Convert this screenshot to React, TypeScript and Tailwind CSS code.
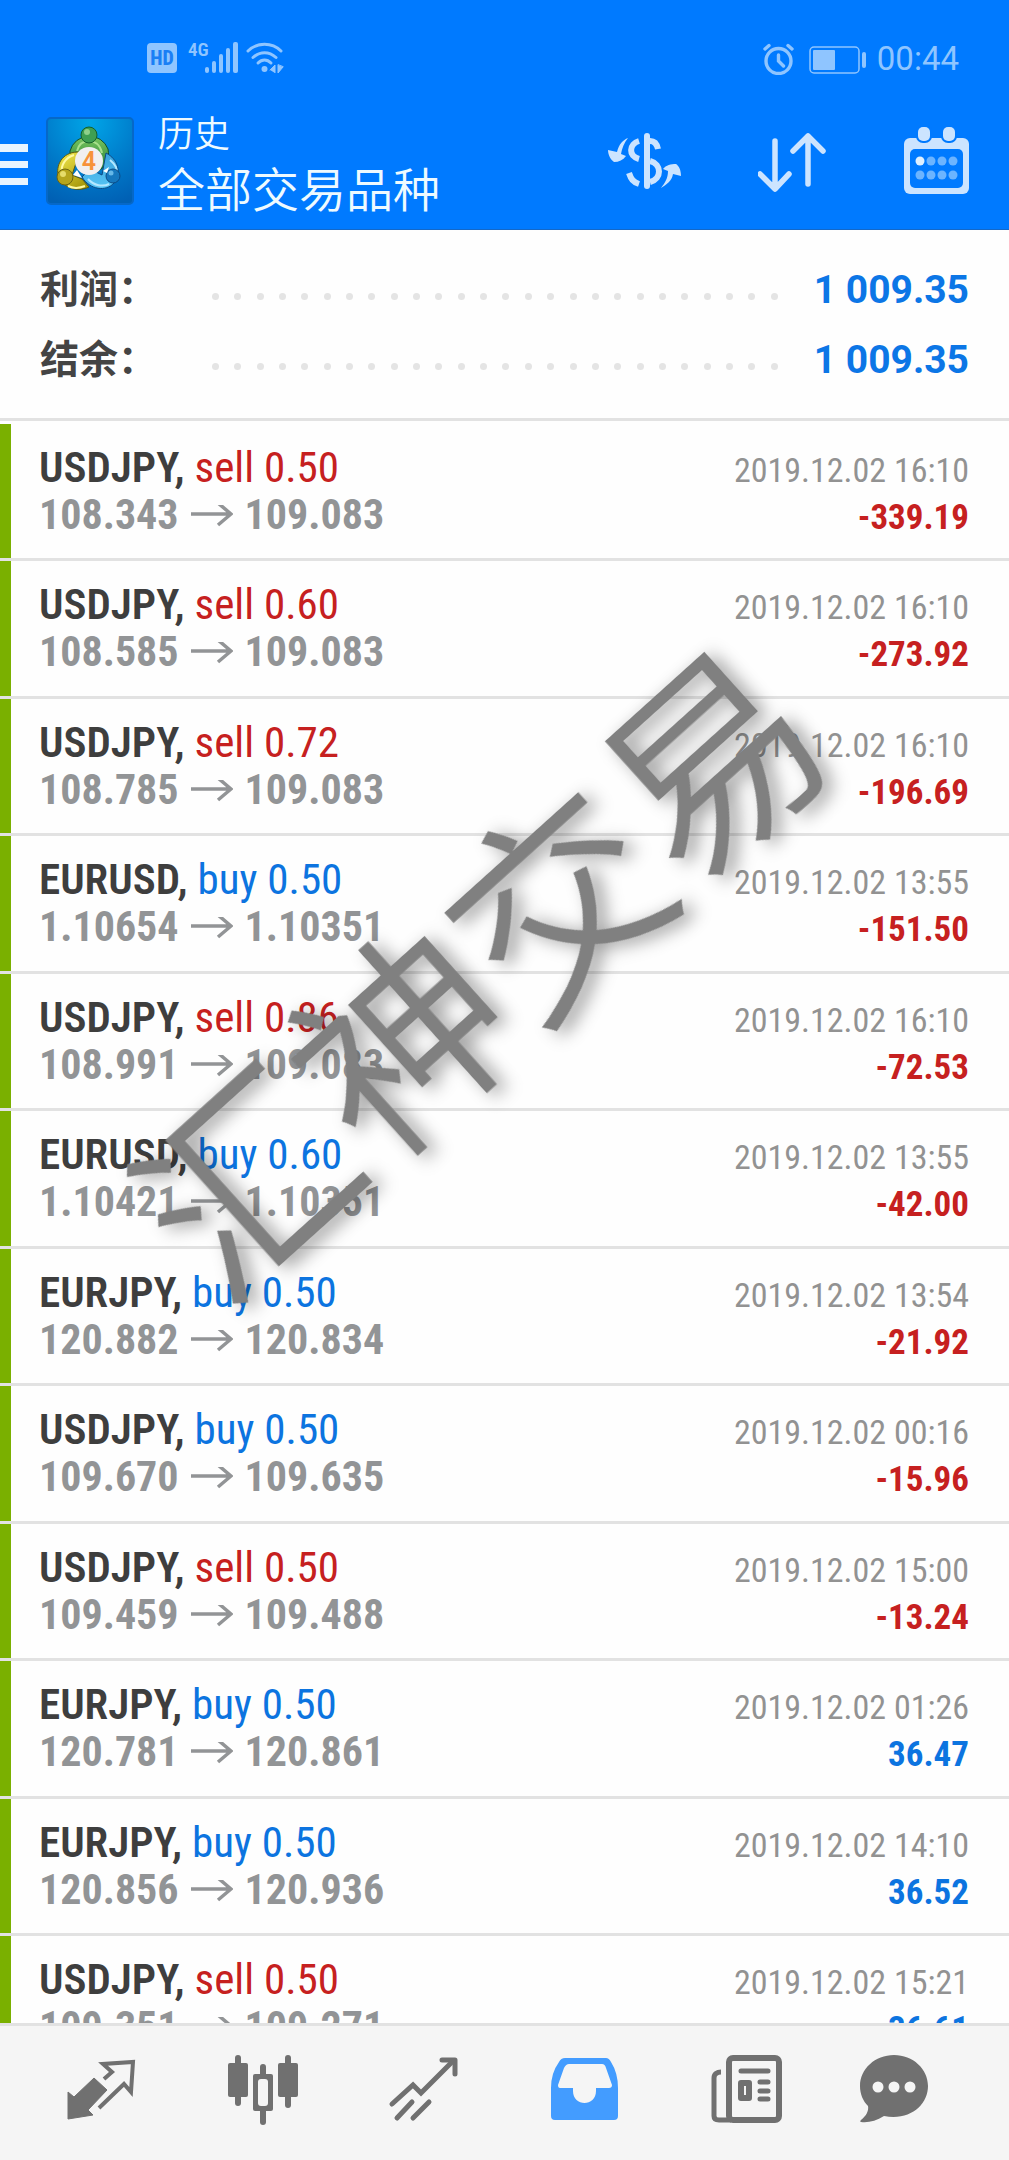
import type { ReactNode } from "react";

interface Deal {
  symbol: string;
  side: "buy" | "sell";
  volume: string;
  open: string;
  close: string;
  time: string;
  profit: string;
}

const deals: Deal[] = [
  { symbol: "USDJPY", side: "sell", volume: "0.50", open: "108.343", close: "109.083", time: "2019.12.02 16:10", profit: "-339.19" },
  { symbol: "USDJPY", side: "sell", volume: "0.60", open: "108.585", close: "109.083", time: "2019.12.02 16:10", profit: "-273.92" },
  { symbol: "USDJPY", side: "sell", volume: "0.72", open: "108.785", close: "109.083", time: "2019.12.02 16:10", profit: "-196.69" },
  { symbol: "EURUSD", side: "buy", volume: "0.50", open: "1.10654", close: "1.10351", time: "2019.12.02 13:55", profit: "-151.50" },
  { symbol: "USDJPY", side: "sell", volume: "0.86", open: "108.991", close: "109.083", time: "2019.12.02 16:10", profit: "-72.53" },
  { symbol: "EURUSD", side: "buy", volume: "0.60", open: "1.10421", close: "1.10351", time: "2019.12.02 13:55", profit: "-42.00" },
  { symbol: "EURJPY", side: "buy", volume: "0.50", open: "120.882", close: "120.834", time: "2019.12.02 13:54", profit: "-21.92" },
  { symbol: "USDJPY", side: "buy", volume: "0.50", open: "109.670", close: "109.635", time: "2019.12.02 00:16", profit: "-15.96" },
  { symbol: "USDJPY", side: "sell", volume: "0.50", open: "109.459", close: "109.488", time: "2019.12.02 15:00", profit: "-13.24" },
  { symbol: "EURJPY", side: "buy", volume: "0.50", open: "120.781", close: "120.861", time: "2019.12.02 01:26", profit: "36.47" },
  { symbol: "EURJPY", side: "buy", volume: "0.50", open: "120.856", close: "120.936", time: "2019.12.02 14:10", profit: "36.52" },
  { symbol: "USDJPY", side: "sell", volume: "0.50", open: "109.351", close: "109.271", time: "2019.12.02 15:21", profit: "36.61" },
];

const summary = [
  { label: "利润\uff1a", value: "1 009.35" },
  { label: "结余\uff1a", value: "1 009.35" },
];

function StatusBar() {
  return (
    <div className="flex h-[100px] items-start justify-between pt-[41px] pr-[50px] pl-[147px] text-[#8fc5ff]">
      <div className="flex items-center">
        {/* HD */}
        <svg className="h-8 w-[30px]" viewBox="0 0 30 32">
          <rect y="2" width="30" height="30" rx="4" fill="currentColor" />
          <text x="15" y="24" textAnchor="middle" fontSize="20" fontWeight="800" fill="#1a7ff5" className="font-['Roboto_Condensed',Roboto]">
            HD
          </text>
        </svg>
        {/* 4G + señal */}
        <svg className="ml-[11px] h-8 w-[51px] overflow-visible" viewBox="0 0 51 32" fill="currentColor">
          <text x="0" y="15" fontSize="19" fontWeight="600" fill="currentColor" className="font-['Roboto_Condensed',Roboto]">
            4G
          </text>
          <rect x="17" y="26" width="4" height="6" rx="2" />
          <rect x="24" y="20" width="4" height="12" rx="2" />
          <rect x="31" y="13" width="4" height="19" rx="2" />
          <rect x="38" y="7" width="4" height="25" rx="2" />
          <rect x="45" y="1" width="5" height="31" rx="2" />
        </svg>
        {/* Wifi */}
        <svg className="ml-[7px] h-8 w-[38px]" viewBox="0 0 38 32" fill="none" stroke="currentColor" strokeWidth="3" strokeLinecap="round">
          <path d="M2 10C11 1 26 1 35 10" />
          <path d="M7 16.5C14 10 23 10 30 16.5" />
          <path d="M12 22C16 18 21 18 25 22" />
          <circle cx="18.500" cy="28" r="3" fill="currentColor" stroke="none" />
          <path d="M24 29 29 24v8M32 24v8l5-6z" strokeWidth="1" fill="currentColor" />
        </svg>
      </div>
      <div className="flex items-center">
        <svg className="h-8 w-[31px]" viewBox="0 0 31 32" fill="none" stroke="currentColor" strokeWidth="3.400" strokeLinecap="round">
          <circle cx="15.500" cy="18" r="12.500" />
          <path d="M2 6l4-3.500M29 6l-4-3.500M15.500 12v6l5 5" />
        </svg>
        <svg className="ml-[15px] h-8 w-[57px]" viewBox="0 0 57 32" fill="none">
          <rect x="1" y="4" width="49" height="26" rx="4" stroke="currentColor" strokeWidth="1.500" />
          <rect x="4" y="7" width="22" height="20" rx="1" fill="currentColor" />
          <rect x="53" y="9" width="4" height="16" rx="2" fill="currentColor" />
        </svg>
        <span className="ml-[11px] text-[33px] leading-9">00:44</span>
      </div>
    </div>
  );
}

function AppLogo() {
  return (
    <svg className="ml-[18px] size-[88px] shrink-0" viewBox="0 0 88 88">
      <defs>
        <radialGradient id="bg" cx="0.5" cy="0.05" r="1">
          <stop offset="0" stopColor="#00a5e8" />
          <stop offset="0.6" stopColor="#0078c8" />
          <stop offset="1" stopColor="#0060b4" />
        </radialGradient>
        <linearGradient id="green" x2="0" y2="1">
          <stop offset="0" stopColor="#7cc860" />
          <stop offset="1" stopColor="#1f7a34" />
        </linearGradient>
        <linearGradient id="yellow" x2="0.6" y2="1">
          <stop offset="0" stopColor="#f6ec50" />
          <stop offset="1" stopColor="#a89a0c" />
        </linearGradient>
        <linearGradient id="blue" x2="0" y2="1">
          <stop offset="0" stopColor="#3aa2dc" />
          <stop offset="1" stopColor="#56c4f4" />
        </linearGradient>
      </defs>
      <rect x="1" y="1" width="86" height="86" rx="4" fill="url(#bg)" stroke="#0668c8" strokeWidth="2" />
      <g strokeWidth="1">
        <path d="M24 34A20 20 0 0 1 62 32C64 42 60 50 52 54L44 40 34 35 24 37Z" fill="url(#green)" stroke="#12502a" />
        <path d="M31 34C33 26 38 24 43 24S54 27 56 36" fill="none" stroke="#a8e08c" strokeWidth="2" />
        <path d="M60 36C72 42 76 56 68 66C60 75 44 73 36 60L44 52 56 58Z" fill="url(#blue)" stroke="#0b4a86" />
        <path d="M64 43C70 48 72 52 70 58M42 62C48 69 57 70 63 67" fill="none" stroke="#b4e8ff" strokeWidth="2" />
        <path d="M34 35C18 34 10 46 12 58C16 70 30 76 43 70L36 62 26 58 30 46Z" fill="url(#yellow)" stroke="#5c5a10" />
        <path d="M28 38C18 41 15 50 16 54M22 69C28 72 34 71 39 69" fill="none" stroke="#fff9a0" strokeWidth="2" />
        <circle cx="43" cy="18" r="8" fill="#3f9f52" stroke="#15602c" />
        <circle cx="41" cy="15" r="3" fill="#8ed08a" />
        <circle cx="19" cy="60" r="8" fill="#b5a51c" stroke="#6c6410" />
        <circle cx="17" cy="57" r="3" fill="#e6dc6a" />
        <circle cx="67" cy="59" r="7" fill="#1678be" stroke="#0c4c86" />
        <circle cx="65" cy="56" r="2.500" fill="#66b8e8" />
        <path d="M27 58 36 61 31 53ZM57 54 63 50 61 56Z" fill="#fff" />
      </g>
      <circle cx="43" cy="44" r="14" fill="#f1eff0" />
      <text x="43" y="53" textAnchor="middle" fontSize="25" fontWeight="600" fill="#f7923a" className="font-[Roboto]">
        4
      </text>
    </svg>
  );
}

function Toolbar() {
  return (
    <div className="flex h-[130px] items-center border-b border-[#1468c8] pr-10 pb-2">
      <button type="button" aria-label="菜单" className="text-[#e8f4ff]">
        <svg className="h-[50px] w-7" viewBox="0 0 28 50" fill="currentColor">
          <path d="M0 8h28v8H0zM0 25h28v7H0zM0 42h28v7H0z" />
        </svg>
      </button>
      <AppLogo />
      <h1 className="ml-6 flex-1 pt-[10px] font-[350] text-[#eefaff]">
        <span className="block text-[36px] leading-[50px]">历史</span>
        <span className="block text-[47px] leading-[62px]">全部交易品种</span>
      </h1>
      <div className="flex items-center gap-[77px] text-[#cce4ff]">
        <button type="button" aria-label="品种">
          <svg className="h-[68px] w-[73px]" viewBox="0 0 73 68" fill="none" stroke="currentColor">
            <path d="M39 9v50" strokeWidth="6" strokeLinecap="round" />
            <path d="M31 14C21 17 20 29 31 32M42 14C47 14 49 17 50 22M31 57C25 55 23 52 21 46M42 34C54 37 54 52 42 55" strokeWidth="6" />
            <path d="M20 11C15 13 11 17 9 25L0 23C0 28 3 33 6 35C11 35 15 33 18 29L13 27C14 21 16 16 20 11Z" fill="currentColor" stroke="none" />
            <path d="M53 61C58 58 64 54 65 47L73 49C73 43 71 39 68 37C63 37 58 38 55 42L60 44C60 51 57 56 53 61Z" fill="currentColor" stroke="none" />
          </svg>
        </button>
        <button type="button" aria-label="排序">
          <svg className="h-[68px] w-[69px]" viewBox="0 0 69 68" fill="none" stroke="currentColor" strokeWidth="5.500" strokeLinecap="round" strokeLinejoin="round">
            <path d="M17 14v47M2 47l15 15 14-15" />
            <path d="M50 57V9M35 24 50 9l15 15" />
          </svg>
        </button>
        <button type="button" aria-label="日期">
          <svg className="h-[68px] w-[65px]" viewBox="0 0 65 68">
            <rect y="11" width="65" height="56" rx="6" fill="currentColor" />
            <rect x="6" y="22" width="53" height="39" rx="5" fill="#007aff" />
            <rect x="12" y="-3" width="16" height="19" rx="7" fill="#007aff" />
            <rect x="37" y="-3" width="16" height="19" rx="7" fill="#007aff" />
            <rect x="14" y="0" width="12" height="14" rx="5" fill="currentColor" />
            <rect x="39" y="0" width="12" height="14" rx="5" fill="currentColor" />
            <g fill="#6cb4ff">
              <circle cx="16" cy="34" r="4.500" fill="#dff0ff" />
              <circle cx="27" cy="34" r="4.500" />
              <circle cx="38" cy="34" r="4.500" />
              <circle cx="49" cy="34" r="4.500" />
              <circle cx="16" cy="48" r="4.500" />
              <circle cx="27" cy="48" r="4.500" />
              <circle cx="38" cy="48" r="4.500" />
              <circle cx="49" cy="48" r="4.500" />
            </g>
          </svg>
        </button>
      </div>
    </div>
  );
}

function SummaryRow({ label, value }: { label: string; value: string }) {
  return (
    <div className="flex h-[70px] items-center font-bold">
      <dt className="w-[172px] text-[39px] text-[#444444]">{label}</dt>
      <dd className="flex flex-1 items-center">
        <span aria-hidden="true" className="mt-3 mr-9 flex flex-1 justify-between">
          {Array.from({ length: 26 }, (_, i) => (
            <span key={i} className="size-[7px] rounded-full bg-[#e4e4e4]" />
          ))}
        </span>
        <span className="text-[39px] text-[#0c76e6]">{value}</span>
      </dd>
    </div>
  );
}

function DealRow({ deal }: { deal: Deal }) {
  return (
    <li className="h-[138px] border-b-3 border-[#e2e2e2] odd:h-[137px]">
      <div className="h-full border-l-11 border-[#7ab000] pt-[19px] pr-10 pl-7 font-['Roboto_Condensed',Roboto,sans-serif]">
        <div className="flex h-12 items-baseline justify-between text-[43px] leading-12">
          <p>
            <span className="font-semibold text-[#3e3e3e]">{deal.symbol}, </span>
            <span className={deal.side === "buy" ? "text-[#0c74e0]" : "text-[#c62020]"}>
              {deal.side} {deal.volume}
            </span>
          </p>
          <time className="text-[34px] text-[#929292]">{deal.time}</time>
        </div>
        <div className="flex h-12 items-baseline justify-between text-[42px] leading-12 font-bold">
          <p className="flex items-baseline text-[#929496]">
            {deal.open}
            <svg className="mx-3 h-6 w-[42px]" viewBox="0 0 42 24" fill="none" stroke="currentColor" strokeWidth="3.500">
              <path d="M0 9h40M27-2l13 11-13 11" />
            </svg>
            {deal.close}
          </p>
          <span className={deal.profit.startsWith("-") ? "text-[35px] text-[#c62020]" : "text-[35px] text-[#0c74e0]"}>{deal.profit}</span>
        </div>
      </div>
    </li>
  );
}

function NavItem({ label, active, children }: { label: string; active?: boolean; children: ReactNode }) {
  return (
    <a href="#" aria-label={label} className={active ? "flex justify-center text-[#439cff]" : "flex justify-center text-[#707070]"}>
      <svg className="size-[72px]" viewBox="0 0 72 72" fill="none" stroke="currentColor">
        {children}
      </svg>
    </a>
  );
}

function BottomNav() {
  return (
    <nav className="grid h-[137px] shrink-0 grid-cols-[repeat(5,161fr)_136fr] border-t-3 border-[#e2e2e2] bg-[#f5f5f5] pt-[28px] pr-[47px] pl-[21px]">
      <NavItem label="行情">
        <path d="M2 38 8 43 28 24 41 36 22 56 27 61 2 65Z" fill="currentColor" strokeWidth="1" strokeLinejoin="round" />
        <path d="M38 25 46 18 37 10 67 8 65 38 58 30 33 54" strokeWidth="4" />
      </NavItem>
      <NavItem label="图表">
        <g fill="currentColor" stroke="none">
          <rect x="8" y="1" width="6" height="51" rx="3" />
          <rect x="1" y="9" width="20" height="34" rx="2" />
          <rect x="33" y="10" width="6" height="61" rx="3" />
          <rect x="26" y="20" width="20" height="37" rx="2" />
          <rect x="58" y="1" width="6" height="53" rx="3" />
          <rect x="51" y="9" width="20" height="34" rx="2" />
          <rect x="31" y="25" width="10" height="27" rx="3" fill="#f5f5f5" />
        </g>
      </NavItem>
      <NavItem label="交易">
        <path d="M4 50 25 31 33 39 64 8" strokeWidth="5" strokeLinecap="round" />
        <path d="M54 6h13v14" strokeWidth="5" strokeLinecap="round" strokeLinejoin="round" />
        <path d="M9 64 24 48M25 64 41 48" strokeWidth="5" strokeLinecap="round" />
      </NavItem>
      <NavItem label="历史" active>
        <path
          d="M16 4H57Q60 4 62 8Q69 19 69 34V62Q69 66 65 66H6Q2 66 2 62V34Q2 19 10 8Q12 4 16 4ZM20 10Q17 10 15 14L9 31Q9 34 11 34H24V37C24 53 47 53 47 37V34H60Q63 34 63 31L57 14Q56 10 53 10Z"
          fill="currentColor"
          fillRule="evenodd"
          stroke="none"
        />
      </NavItem>
      <NavItem label="新闻">
        <rect x="19" y="4" width="50" height="62" rx="4" strokeWidth="6" />
        <path d="M11 18C7 18 4 20 4 24V62C4 65 6 66 9 66H21" strokeWidth="5" />
        <path d="M31 17H58M50 28H58M50 37H58M50 45H58" strokeWidth="5" strokeLinecap="round" />
        <rect x="31" y="29" width="8" height="15" strokeWidth="6" strokeLinejoin="round" />
      </NavItem>
      <NavItem label="信息">
        <path d="M36 1C55 1 70 15 70 32C70 51 52 67 26 62C18 67 10 69 3 68C2 68 2 67 3 66C8 62 11 57 10 52C5 47 2 40 2 32C2 15 17 1 36 1Z" fill="currentColor" stroke="none" />
        <g fill="#f5f5f5" stroke="none">
          <circle cx="20" cy="33" r="5.500" />
          <circle cx="36" cy="33" r="5.500" />
          <circle cx="52" cy="33" r="5.500" />
        </g>
      </NavItem>
    </nav>
  );
}

export default function App() {
  return (
    <div className="relative flex h-screen flex-col overflow-hidden bg-[#fefefe] font-[Roboto,'Noto_Sans_CJK_SC',sans-serif]">
      <header className="shrink-0 bg-[#007aff]">
        <StatusBar />
        <Toolbar />
      </header>
      <main className="min-h-0 flex-1 overflow-y-auto [scrollbar-width:none]">
        <dl className="border-b-3 border-[#e2e2e2] pt-[25px] pr-10 pb-[23px] pl-10">
          {summary.map((row) => (
            <SummaryRow key={row.label} label={row.label} value={row.value} />
          ))}
        </dl>
        <ul className="pt-[3px]">
          {deals.map((deal, i) => (
            <DealRow key={i} deal={deal} />
          ))}
        </ul>
      </main>
      <BottomNav />

      {/* Marca de agua */}
      <div className="pointer-events-none absolute top-[873px] left-[66px] -rotate-42 text-[209px] leading-[210px] font-[350] whitespace-nowrap text-[#808080] drop-shadow-[5px_8px_9px_rgba(0,0,0,0.4)]">
        汇神交易
      </div>
    </div>
  );
}
